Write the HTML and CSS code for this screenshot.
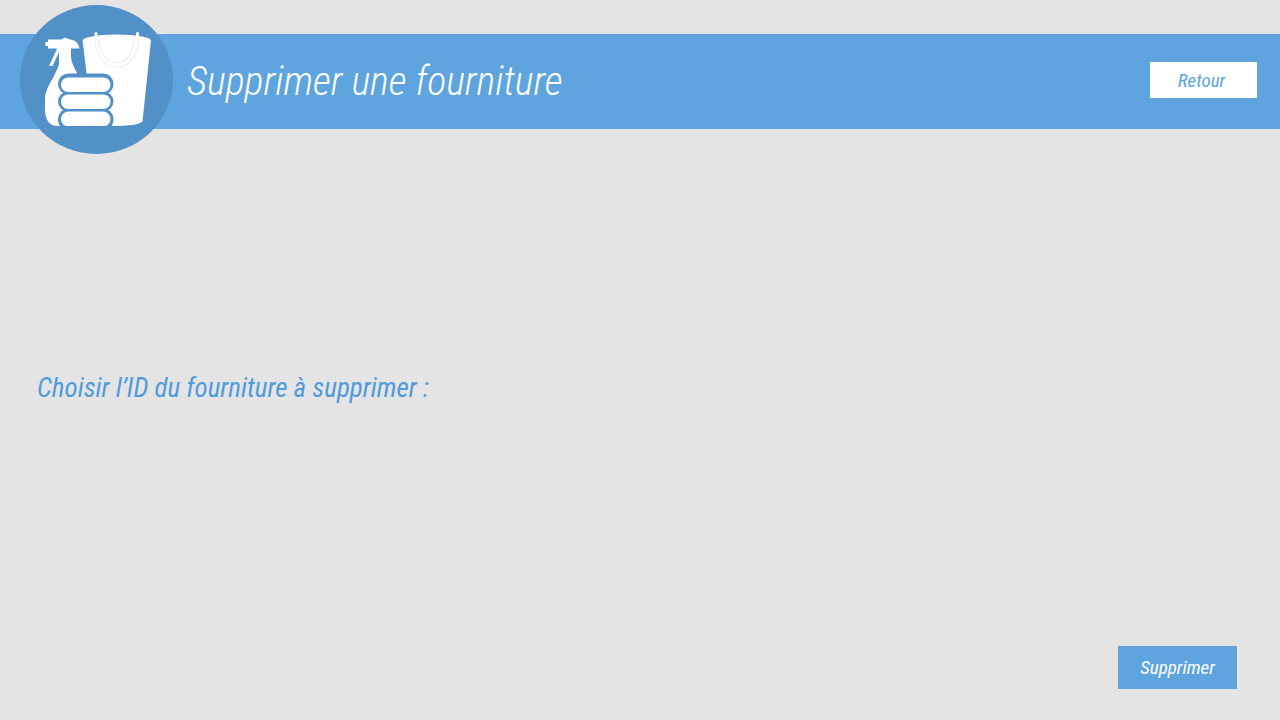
FILE: index.html
```html
<!DOCTYPE html>
<html lang="fr">
<head>
<meta charset="utf-8">
<meta name="viewport" content="width=device-width, initial-scale=1">
<title>Supprimer une fourniture</title>
<link rel="stylesheet" href="styles.css">
</head>
<body>
<header class="banner">
  <svg class="logo" viewBox="0 0 153 149" aria-hidden="true">
    <ellipse class="disc" cx="76.5" cy="74.5" rx="76.5" ry="74.5"/>
    <path class="shape" d="M25.500 37H28V34.500H42Q43 32 46 33L52 35Q58 35.500 59.500 43.500H51V53Q52 59 57 68V90H46V121H38Q25 121 25 104V94C25 82 36 71 39 59V47L32.500 61H29L37 44L36 43.500H28V41H25.500Z"/>
    <path class="shape" d="M62.500 35Q67 30 96.500 29.500Q127 30 131 35L122.500 116.500Q118 121 92 121H70V90L66.500 68Z"/>
    <path class="handle" d="M76 31C77 45 83 60 97 60S116 45 117 31"/>
    <path class="handle-core" d="M76 31C77 45 83 60 97 60S116 45 117 31"/>
    <path class="tab" d="M76 34V28.500M117.500 34V28.500"/>
    <clipPath id="base"><path d="M25 60H131V121H25Z"/></clipPath>
    <g clip-path="url(#base)">
      <g class="halo">
        <rect x="38" y="68.500" width="55.500" height="21" rx="10.500"/>
        <rect x="38" y="86.500" width="55.500" height="20" rx="10"/>
        <rect x="38" y="103.500" width="55.500" height="22" rx="10.500"/>
      </g>
      <g class="roll">
        <rect x="41" y="72.500" width="49.500" height="14.500" rx="7.250"/>
        <rect x="41" y="89.500" width="49.500" height="14.500" rx="7.250"/>
        <rect x="41" y="106.500" width="49.500" height="15" rx="7.500"/>
      </g>
    </g>
  </svg>
  <h1 class="title">Supprimer une fourniture</h1>
  <button class="button back" type="button">Retour</button>
</header>
<main class="content">
  <p class="prompt">Choisir l’ID du fourniture à supprimer :</p>
</main>
<footer class="actions">
  <button class="button delete" type="button">Supprimer</button>
</footer>
</body>
</html>
```
FILE: styles.css
```css
* { box-sizing: border-box; }

body {
  margin: 0;
  min-height: 100vh;
  display: flex;
  flex-direction: column;
  background: #e4e4e4;
  font-family: "Agency FB", "Roboto Condensed", Roboto, "Liberation Sans", sans-serif;
  font-style: italic;
}

.banner {
  display: flex;
  align-items: center;
  height: 95px;
  margin-top: 34px;
  padding: 0 23px 0 20px;
  background: #5ea4df;
}

.logo {
  flex: none;
  width: 153px;
  height: 149px;
  margin-bottom: 4px;
}

.disc { fill: #5191c7; }
.shape { fill: #fff; }
.handle { fill: none; stroke: #e6e8ea; stroke-width: 5; }
.handle-core { fill: none; stroke: #fff; stroke-width: 3.5; }
.tab { fill: none; stroke: #fff; stroke-width: 3; stroke-linecap: round; }
.halo { fill: #5191c7; }
.roll { fill: #fff; }

.title {
  flex: 1;
  margin: 0 0 0 14px;
  color: #fff;
  font-size: 40px;
  font-weight: 300;
  line-height: 48px;
}

.button {
  border: 0;
  padding: 0;
  font: inherit;
  font-size: 19px;
  cursor: pointer;
}

.back {
  width: 107px;
  height: 36px;
  margin-bottom: 3px;
  padding-right: 4px;
  background: #fff;
  color: #5ea4df;
}

.content {
  flex: 1;
  display: flex;
  align-items: center;
  padding: 0 37px;
}

.prompt {
  margin: 0;
  color: #4f9bdc;
  font-size: 27px;
  line-height: 36px;
}

.actions {
  display: flex;
  justify-content: flex-end;
  padding: 0 43px 31px;
}

.delete {
  width: 119px;
  height: 43px;
  background: #5ea4df;
  color: #fff;
}
```
